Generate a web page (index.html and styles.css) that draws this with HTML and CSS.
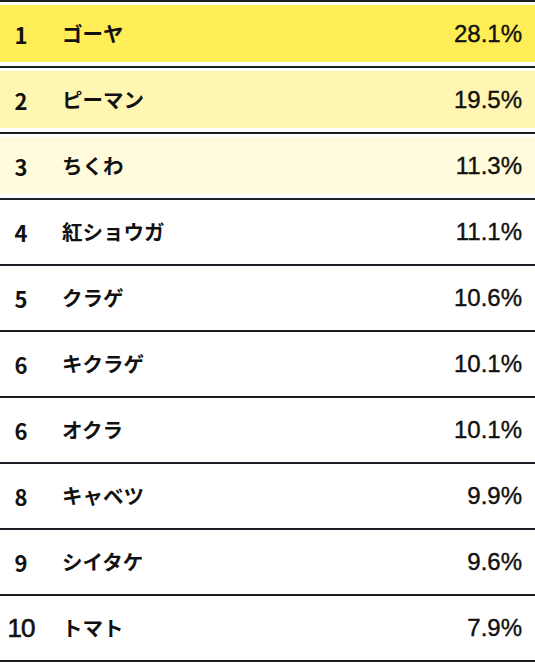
FILE: index.html
```html
<!DOCTYPE html>
<html lang="ja">
<head>
<meta charset="utf-8">
<link rel="stylesheet" href="styles.css">
</head>
<body>
<div class="ranking">
  <div class="row r1"><div class="cell"><span class="rank">1</span><span class="name">ゴーヤ</span><span class="pct">28.1%</span></div></div>
  <div class="row r2"><div class="cell"><span class="rank">2</span><span class="name">ピーマン</span><span class="pct">19.5%</span></div></div>
  <div class="row r3"><div class="cell"><span class="rank">3</span><span class="name">ちくわ</span><span class="pct">11.3%</span></div></div>
  <div class="row"><div class="cell"><span class="rank">4</span><span class="name">紅ショウガ</span><span class="pct">11.1%</span></div></div>
  <div class="row"><div class="cell"><span class="rank">5</span><span class="name">クラゲ</span><span class="pct">10.6%</span></div></div>
  <div class="row"><div class="cell"><span class="rank">6</span><span class="name">キクラゲ</span><span class="pct">10.1%</span></div></div>
  <div class="row"><div class="cell"><span class="rank">6</span><span class="name">オクラ</span><span class="pct">10.1%</span></div></div>
  <div class="row"><div class="cell"><span class="rank">8</span><span class="name">キャベツ</span><span class="pct">9.9%</span></div></div>
  <div class="row"><div class="cell"><span class="rank">9</span><span class="name">シイタケ</span><span class="pct">9.6%</span></div></div>
  <div class="row last"><div class="cell"><span class="rank wide">10</span><span class="name">トマト</span><span class="pct">7.9%</span></div></div>
</div>
</body>
</html>
```
FILE: styles.css
```css
html, body {
  margin: 0;
  padding: 0;
  background: #ffffff;
}
.ranking {
  width: 535px;
  display: flex;
  flex-direction: column;
  color: #111111;
}
.row {
  border-top: 2px solid #1d1d26;
  padding: 3px 0 4px;
}
.row.last {
  border-bottom: 2px solid #1d1d26;
}
.cell {
  height: 57px;
  display: grid;
  grid-template-columns: 42px 1fr 103px;
  align-items: center;
}
.r1 .cell { background: #ffee55; }
.r2 .cell { background: #fff6b3; }
.r3 .cell { background: #fffbdc; }
.rank {
  text-align: center;
  font-family: "Noto Sans CJK JP", "Noto Sans", sans-serif;
  font-weight: 700;
  font-size: 22px;
  line-height: 1;
}
.rank.wide {
  font-family: "Liberation Sans", Arial, sans-serif;
  font-weight: 400;
  font-size: 26px;
  letter-spacing: -1px;
  -webkit-text-stroke: 0.6px #111111;
}
.name {
  padding-left: 20px;
  font-family: "Noto Sans CJK JP", sans-serif;
  font-weight: 700;
  font-size: 20.5px;
  line-height: 1;
}
.pct {
  text-align: right;
  padding-right: 13px;
  font-family: "Liberation Sans", Arial, sans-serif;
  font-size: 24px;
  line-height: 1;
  -webkit-text-stroke: 0.4px #111111;
}
```
